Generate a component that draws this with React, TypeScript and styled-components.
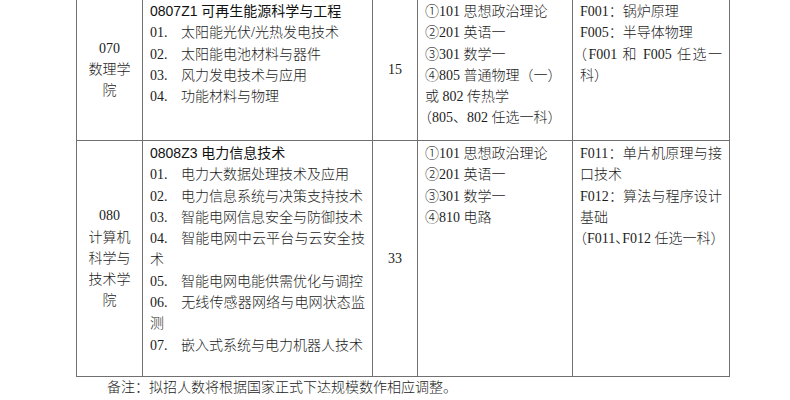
import React from 'react';
import styled, { createGlobalStyle } from 'styled-components';

const GlobalStyle = createGlobalStyle`
  html, body {
    margin: 0;
    padding: 0;
    background: #ffffff;
  }
  body {
    font-family: "Liberation Serif", "Noto Sans CJK SC", serif;
    font-size: 14px;
    color: #1c1c1c;
  }
`;

const Page = styled.div`
  width: 790px;
  height: 400px;
  overflow: hidden;
`;

const Sheet = styled.div`
  margin-top: -2px;
  padding-left: 76px;
`;

const Table = styled.table`
  width: 653px;
  border-collapse: collapse;
  table-layout: fixed;
  line-height: 21.3px;
`;

const Row = styled.tr<{ $height: number }>`
  height: ${(p) => p.$height}px;
`;

const Cell = styled.td<{ $center?: boolean }>`
  border: 1px solid #707070;
  padding: 2px 7px 2px 7px;
  vertical-align: ${(p) => (p.$center ? 'middle' : 'top')};
  text-align: ${(p) => (p.$center ? 'center' : 'left')};
  font-weight: 300;
`;

const Line = styled.div<{ $justify?: boolean }>`
  white-space: nowrap;
  text-align: ${(p) => (p.$justify ? 'justify' : 'left')};
  text-align-last: ${(p) => (p.$justify ? 'justify' : 'auto')};
`;

const CenterLine = styled.div`
  text-align: center;
`;

const Major = styled.div`
  font-family: "Liberation Sans", "Noto Sans CJK SC", sans-serif;
  font-weight: 400;
  color: #111;
`;

const Num = styled.span`
  display: inline-block;
  width: 31px;
`;

// full-width punctuation squeezed to half width, as the word processor does
const Squeeze = styled.span`
  font-feature-settings: "halt";
`;

const Note = styled.div`
  padding-left: 31px;
  line-height: 21.3px;
  font-weight: 300;
`;

type Item = { no: string; text: string; rest?: string };

const Direction = ({ item }: { item: Item }) =>
  item.rest ? (
    <>
      <Line $justify>
        <Num>{item.no}</Num>
        {item.text}
      </Line>
      <Line>{item.rest}</Line>
    </>
  ) : (
    <Line>
      <Num>{item.no}</Num>
      {item.text}
    </Line>
  );

const energy: Item[] = [
  { no: '01.', text: '太阳能光伏/光热发电技术' },
  { no: '02.', text: '太阳能电池材料与器件' },
  { no: '03.', text: '风力发电技术与应用' },
  { no: '04.', text: '功能材料与物理' },
];

const power: Item[] = [
  { no: '01.', text: '电力大数据处理技术及应用' },
  { no: '02.', text: '电力信息系统与决策支持技术' },
  { no: '03.', text: '智能电网信息安全与防御技术' },
  { no: '04.', text: '智能电网中云平台与云安全技', rest: '术' },
  { no: '05.', text: '智能电网电能供需优化与调控' },
  { no: '06.', text: '无线传感器网络与电网状态监', rest: '测' },
  { no: '07.', text: '嵌入式系统与电力机器人技术' },
];

export default function App() {
  return (
    <Page>
      <GlobalStyle />
      <Sheet>
        <Table>
          <colgroup>
            <col style={{ width: 66 }} />
            <col style={{ width: 230 }} />
            <col style={{ width: 45 }} />
            <col style={{ width: 155 }} />
            <col style={{ width: 157 }} />
          </colgroup>
          <tbody>
            <Row $height={142}>
              <Cell $center>
                <CenterLine>070</CenterLine>
                <CenterLine>数理学院</CenterLine>
              </Cell>
              <Cell>
                <Major>0807Z1 可再生能源科学与工程</Major>
                {energy.map((d) => (
                  <Direction key={d.no} item={d} />
                ))}
              </Cell>
              <Cell $center>15</Cell>
              <Cell>
                <Line>①101 思想政治理论</Line>
                <Line>②201 英语一</Line>
                <Line>③301 数学一</Line>
                <Line>④805 普通物理（一）</Line>
                <Line>或 802 传热学</Line>
                <Line>
                  <Squeeze>（</Squeeze>805、802 任选一科）
                </Line>
              </Cell>
              <Cell>
                <Line>F001：锅炉原理</Line>
                <Line>F005：半导体物理</Line>
                <Line $justify>
                  <Squeeze>（</Squeeze>F001 和 F005 任选一
                </Line>
                <Line>科）</Line>
              </Cell>
            </Row>
            <Row $height={236}>
              <Cell $center>
                <CenterLine>080</CenterLine>
                <CenterLine>计算机科学与技术学院</CenterLine>
              </Cell>
              <Cell>
                <Major>0808Z3 电力信息技术</Major>
                {power.map((d) => (
                  <Direction key={d.no} item={d} />
                ))}
              </Cell>
              <Cell $center>33</Cell>
              <Cell>
                <Line>①101 思想政治理论</Line>
                <Line>②201 英语一</Line>
                <Line>③301 数学一</Line>
                <Line>④810 电路</Line>
              </Cell>
              <Cell>
                <Line $justify>F011：单片机原理与接</Line>
                <Line>口技术</Line>
                <Line $justify>F012：算法与程序设计</Line>
                <Line>基础</Line>
                <Line>
                  <Squeeze>（</Squeeze>F011<Squeeze>、</Squeeze>F012 任选一科）
                </Line>
              </Cell>
            </Row>
          </tbody>
        </Table>
        <Note>备注：拟招人数将根据国家正式下达规模数作相应调整。</Note>
      </Sheet>
    </Page>
  );
}
